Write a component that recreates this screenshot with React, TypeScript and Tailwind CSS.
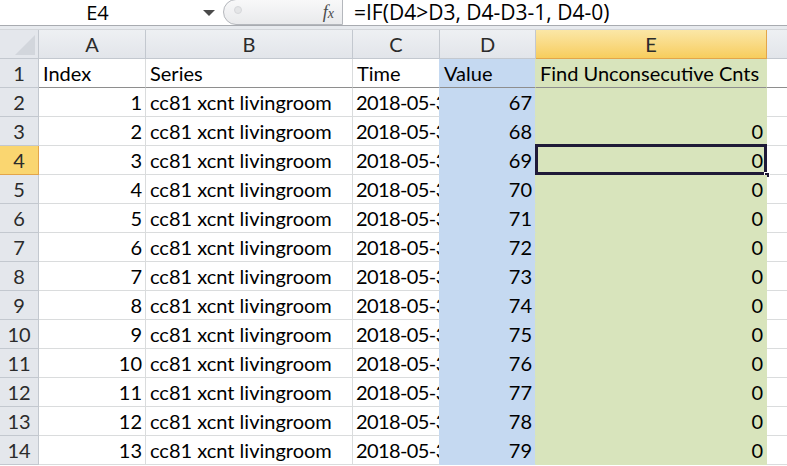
import React from "react";

const rows = Array.from({ length: 13 }, (_, i) => ({
  index: i + 1,
  value: 67 + i,
  cnt: i === 0 ? "" : "0",
}));

const cols = ["A", "B", "C", "D", "E"];

function ColHeader({ label, selected }: { label: string; selected?: boolean }) {
  return (
    <div
      className={`flex items-center justify-center border-r border-b ${
        selected
          ? "bg-gradient-to-b from-[#fbe7a6] to-[#f7cd5c] border-[#e3a54a]"
          : "bg-gradient-to-b from-[#eef0f3] to-[#e2e5ea] border-[#c3c8cf]"
      } text-[#2b2b2b]`}
    >
      {label}
    </div>
  );
}

function RowHeader({ n, selected }: { n: number; selected?: boolean }) {
  return (
    <div
      className={`flex items-center justify-center border-r border-b ${
        selected
          ? "bg-[#fad670] border-[#e3a54a]"
          : "bg-[#e4e7ec] border-[#c3c8cf]"
      } text-[#2b2b2b]`}
    >
      {n}
    </div>
  );
}

export default function App() {
  return (
    <div
      className="w-[787px] h-[466px] overflow-hidden bg-white text-black"
      style={{ fontFamily: "Lato, 'Open Sans', sans-serif" }}
    >
      {/* formula bar */}
      <div
        className="flex h-[26px] border-b border-[#a8abb0] text-[20px] leading-none"
        style={{ fontFamily: "'Open Sans', Lato, sans-serif" }}
      >
        <div className="w-[195px] flex items-center justify-center">E4</div>
        <div className="w-[28px] flex items-center justify-center">
          <div className="w-0 h-0 border-l-[6px] border-r-[6px] border-t-[6px] border-l-transparent border-r-transparent border-t-[#4a4a4a]" />
        </div>
        <div className="relative w-[120px] h-[26px] -mt-[1px] rounded-l-[14px] border border-[#b4b7bc] bg-gradient-to-b from-[#f8f8f9] to-[#e9eaec] flex items-center justify-end pr-[8px]">
          <div className="absolute left-[10px] top-[6px] w-[8px] h-[8px] rounded-full bg-[#e4e5e7] border border-[#d6d7da]" />
          <span
            className="italic text-[#4b4b4b] text-[18px]"
            style={{ fontFamily: "'Liberation Serif', serif" }}
          >
            f<span className="text-[14px]">x</span>
          </span>
        </div>
        <div className="flex-1 flex items-center pl-[11px] whitespace-nowrap text-[21px]">
          =IF(D4&gt;D3, D4-D3-1, D4-0)
        </div>
      </div>
      <div className="h-[4px] bg-[#e7eaee] border-b border-[#d3d6da]" />

      {/* sheet grid */}
      <div className="grid grid-cols-[39px_107px_207px_87px_96px_231px_1fr] auto-rows-[29px] text-[20px] leading-none">
        {/* corner */}
        <div className="relative border-r border-b border-[#c3c8cf] bg-[#e4e7ec]">
          <svg className="absolute right-[3px] bottom-[3px]" width="20" height="20">
            <polygon points="20,0 20,20 0,20" fill="#d2d6dc" />
          </svg>
        </div>
        {cols.map((c) => (
          <ColHeader key={c} label={c} selected={c === "E"} />
        ))}
        <div className="border-b border-[#c3c8cf] bg-gradient-to-b from-[#eef0f3] to-[#e2e5ea]" />

        {/* row 1 */}
        <RowHeader n={1} />
        <div className="flex items-center pl-[4px] border-r border-b border-r-[#dadcdd] border-b-[#8e8e8e]">Index</div>
        <div className="flex items-center pl-[4px] border-r border-b border-r-[#dadcdd] border-b-[#8e8e8e]">Series</div>
        <div className="flex items-center pl-[4px] border-r border-b border-r-[#c5d9f1] border-b-[#8e8e8e]">Time</div>
        <div className="flex items-center pl-[4px] bg-[#c5d9f1] border-r border-b border-r-[#d8e4bc] border-b-[#8e8e8e]">Value</div>
        <div className="flex items-center pl-[4px] bg-[#d8e4bc] border-r border-b border-r-[#d8e4bc] border-b-[#8e8e8e] whitespace-nowrap">
          Find Unconsecutive Cnts
        </div>
        <div className="border-b border-[#8e8e8e]" />

        {rows.map((r) => {
          const sel = r.index === 3;
          return (
            <React.Fragment key={r.index}>
              <RowHeader n={r.index + 1} selected={sel} />
              <div className="flex items-center justify-end pr-[3px] border-r border-b border-[#dadcdd]">{r.index}</div>
              <div className="flex items-center pl-[4px] border-r border-b border-[#dadcdd] whitespace-nowrap">
                cc81 xcnt livingroom
              </div>
              <div className="flex items-center pl-[3px] border-r border-b border-b-[#dadcdd] border-r-[#c5d9f1] whitespace-nowrap overflow-hidden">
                <span className="tracking-[-0.6px]">2018-05-31</span>
              </div>
              <div className="flex items-center justify-end pr-[3px] bg-[#c5d9f1] border-r border-b border-r-[#d8e4bc] border-b-[#c5d9f1]">
                {r.value}
              </div>
              <div className="relative flex items-center justify-end pr-[3px] bg-[#d8e4bc] border-r border-b border-[#d8e4bc]">
                {r.cnt}
                {sel && (
                  <>
                    <div className="absolute -left-[1px] -top-[2px] -right-[1px] -bottom-[1px] border-[3px] border-[#1f1a38]" />
                    <div className="absolute -right-[4px] -bottom-[4px] w-[6px] h-[6px] bg-[#1f1a38] border border-white" />
                  </>
                )}
              </div>
              <div className="border-b border-[#dadcdd]" />
            </React.Fragment>
          );
        })}
      </div>
    </div>
  );
}
